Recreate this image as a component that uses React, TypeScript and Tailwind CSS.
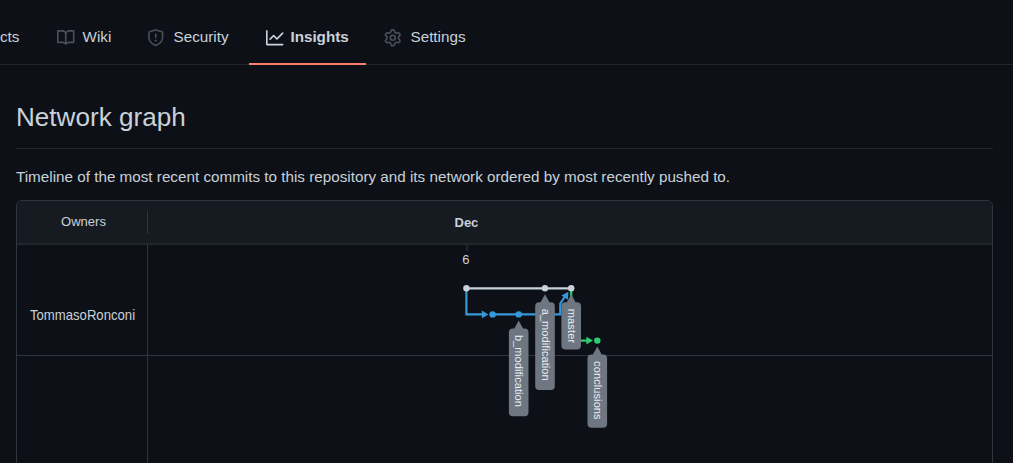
function Octicon({ d, className }: { d: string; className: string }) {
  return (
    <svg viewBox="0 0 16 16" className={`mt-[3.5px] h-[17.5px] w-[17.5px] shrink-0 ${className}`} fill="currentColor" fillRule="evenodd">
      <path d={d} />
    </svg>
  );
}

const BOOK =
  "M0 1.75A.75.75 0 01.75 1h4.253c1.227 0 2.317.59 3 1.501A3.744 3.744 0 0111.006 1h4.245a.75.75 0 01.75.75v10.5a.75.75 0 01-.75.75h-4.507a2.25 2.25 0 00-1.591.659l-.622.621a.75.75 0 01-1.06 0l-.622-.621A2.25 2.25 0 005.258 13H.75a.75.75 0 01-.75-.75V1.75zm8.755 3a2.25 2.25 0 012.25-2.25H14.5v9h-3.757c-.71 0-1.4.201-1.992.572l.004-7.322zm-1.504 7.324l.004-5.073-.002-2.253A2.25 2.25 0 005.003 2.5H1.5v9h3.757a3.75 3.75 0 011.994.574z";
const SHIELD =
  "M7.467.133a1.75 1.75 0 011.066 0l5.25 1.68A1.75 1.75 0 0115 3.48V7c0 1.566-.32 3.182-1.303 4.682-.983 1.498-2.585 2.813-5.032 3.855a1.7 1.7 0 01-1.33 0c-2.447-1.042-4.049-2.357-5.032-3.855C1.32 10.182 1 8.566 1 7V3.48a1.75 1.75 0 011.217-1.667l5.25-1.68zm.61 1.429a.25.25 0 00-.153 0l-5.25 1.68a.25.25 0 00-.174.238V7c0 1.358.275 2.666 1.057 3.86.784 1.194 2.121 2.34 4.366 3.297a.2.2 0 00.154 0c2.245-.956 3.582-2.104 4.366-3.298C13.225 9.666 13.5 8.36 13.5 7V3.48a.25.25 0 00-.174-.237l-5.25-1.68zM9 10.5a1 1 0 11-2 0 1 1 0 012 0zm-.25-5.75a.75.75 0 10-1.5 0v3a.75.75 0 001.5 0v-3z";
const GRAPH =
  "M1.5 1.75a.75.75 0 00-1.5 0v12.5c0 .414.336.75.75.75h14.5a.75.75 0 000-1.5H1.5V1.75zm14.28 2.53a.75.75 0 00-1.06-1.06L10 7.94 7.53 5.47a.75.75 0 00-1.06 0L3.22 8.72a.75.75 0 001.06 1.06L7 7.06l2.47 2.47a.75.75 0 001.06 0l5.25-5.25z";
const GEAR =
  "M7.429 1.525a6.593 6.593 0 011.142 0c.036.003.108.036.137.146l.289 1.105c.147.56.55.967.997 1.189.174.086.341.183.501.29.417.278.97.423 1.53.27l1.102-.303c.11-.03.175.016.195.046.219.31.41.641.573.989.014.031.022.11-.059.19l-.815.806c-.411.406-.562.957-.53 1.456a4.588 4.588 0 010 .582c-.032.499.119 1.05.53 1.456l.815.806c.08.08.073.159.059.19a6.494 6.494 0 01-.573.99c-.02.029-.086.074-.195.045l-1.103-.303c-.559-.153-1.112-.008-1.529.27-.16.107-.327.204-.5.29-.449.222-.851.628-.998 1.189l-.289 1.105c-.029.11-.101.143-.137.146a6.613 6.613 0 01-1.142 0c-.036-.003-.108-.037-.137-.146l-.289-1.105c-.147-.56-.55-.967-.997-1.189a4.502 4.502 0 01-.501-.29c-.417-.278-.97-.423-1.53-.27l-1.102.303c-.11.03-.175-.016-.195-.046a6.492 6.492 0 01-.573-.989c-.014-.031-.022-.11.059-.19l.815-.806c.411-.406.562-.957.53-1.456a4.587 4.587 0 010-.582c.032-.499-.119-1.05-.53-1.456l-.815-.806c-.08-.08-.073-.159-.059-.19a6.44 6.44 0 01.573-.99c.02-.029.086-.075.195-.045l1.103.303c.559.153 1.112.008 1.529-.27.16-.107.327-.204.5-.29.449-.222.851-.628.998-1.189l.289-1.105c.029-.11.101-.143.137-.146zM8 0c-.236 0-.47.01-.701.03-.743.065-1.29.615-1.458 1.261l-.29 1.106c-.017.066-.078.158-.211.224a5.994 5.994 0 00-.668.386c-.123.082-.233.09-.3.071L3.27 2.776c-.644-.177-1.392.02-1.82.63a7.977 7.977 0 00-.704 1.217c-.315.675-.111 1.422.363 1.891l.815.806c.05.048.098.147.088.294a6.084 6.084 0 000 .772c.01.147-.038.246-.088.294l-.815.806c-.474.469-.678 1.216-.363 1.891.2.428.436.835.704 1.218.428.609 1.176.806 1.82.63l1.103-.303c.066-.019.176-.011.299.071.213.143.436.272.668.386.133.066.194.158.212.224l.289 1.106c.169.646.715 1.196 1.458 1.26a8.094 8.094 0 001.402 0c.743-.064 1.29-.614 1.458-1.26l.29-1.106c.017-.066.078-.158.211-.224a5.98 5.98 0 00.668-.386c.123-.082.233-.09.3-.071l1.102.302c.644.177 1.392-.02 1.82-.63.268-.382.505-.789.704-1.217.315-.675.111-1.422-.364-1.891l-.814-.806c-.05-.048-.098-.147-.088-.294a6.1 6.1 0 000-.772c-.01-.147.039-.246.088-.294l.814-.806c.475-.469.679-1.216.364-1.891a7.992 7.992 0 00-.704-1.218c-.428-.609-1.176-.806-1.82-.63l-1.103.303c-.066.019-.176.011-.299-.071a5.991 5.991 0 00-.668-.386c-.133-.066-.194-.158-.212-.224L10.16 1.29C9.99.645 9.444.095 8.701.031A8.094 8.094 0 008 0zm1.5 8a1.5 1.5 0 11-3 0 1.5 1.5 0 013 0zM11 8a3 3 0 11-6 0 3 3 0 016 0z";

function Tab({ icon, label, className, iconClassName }: { icon: string; label: string; className: string; iconClassName: string }) {
  return (
    <a className={`flex h-[56px] shrink-0 items-center whitespace-nowrap ${className}`}>
      <Octicon d={icon} className={iconClassName} />
      <span>{label}</span>
    </a>
  );
}

function BranchTag({ x, y, length, name, textLength }: { x: number; y: number; length: number; name: string; textLength: number }) {
  return (
    <g>
      <path
        fill="#6e7681"
        d={`M${x} ${y}l4.4 8h1.4a4 4 0 0 1 4 4v${length - 16}a4 4 0 0 1 -4 4h-11.6a4 4 0 0 1 -4 -4v-${length - 16}a4 4 0 0 1 4 -4h1.4z`}
      />
      <text
        transform={`translate(${x - 3.4} ${y + 14.5}) rotate(90)`}
        fontSize="11"
        textLength={textLength}
        fill="#e6edf3"
      >
        {name}
      </text>
    </g>
  );
}

function NetworkChart() {
  return (
    <svg
      className="block h-[219px] w-[844px] shrink-0"
      viewBox="148 245 844 219"
      fontFamily='"Liberation Sans", Arial, sans-serif'
    >
      <path d="M148 355.5H992" stroke="#30363d" strokeWidth="1" />
      <path d="M467 245v6" stroke="#21262d" strokeWidth="2" />
      <text x="462.3" y="264" fontSize="13" fill="#c9d1d9">6</text>
      <g fill="none" strokeWidth="2.2">
        <path d="M571.2 288V340.6H588" stroke="#2ecc71" />
        <path d="M466.4 288V314.4H483" stroke="#3498db" />
        <path d="M492.6 314.4H560.3V303.5L566 295" stroke="#3498db" />
        <path d="M466.4 288.3H571.2" stroke="#c9d1d9" />
      </g>
      <g fill="#3498db">
        <path d="M481.8 310.5L488.5 314.4L481.8 318.2z" />
        <path d="M568.4 291.8L568 299.7L561.4 295.4z" />
        <circle cx="492.6" cy="314.4" r="3.2" />
        <circle cx="518.7" cy="314.4" r="3.2" />
      </g>
      <g fill="#2ecc71">
        <path d="M586.4 336.8L593 340.6L586.4 344.4z" />
        <circle cx="597.3" cy="340.6" r="3.2" />
      </g>
      <g fill="#c9d1d9">
        <circle cx="466.4" cy="288.3" r="3.2" />
        <circle cx="545" cy="288.3" r="3.2" />
        <circle cx="571.2" cy="288.3" r="3.2" />
      </g>
      <BranchTag x={571.2} y={294.2} length={55.3} name="master" textLength={34.5} />
      <BranchTag x={545} y={294.2} length={95.8} name="a_modification" textLength={72} />
      <BranchTag x={518.7} y={320.4} length={95.9} name="b_modification" textLength={72} />
      <BranchTag x={597.3} y={346.6} length={81.1} name="conclusions" textLength={58.5} />
    </svg>
  );
}

export default function App() {
  return (
    <div className="h-[463px] w-[1013px] overflow-hidden bg-[#0d1117] font-['Liberation_Sans',Arial,sans-serif] text-[15.24px] leading-[23px] text-[#c9d1d9]">
      <nav className="flex h-[65px] items-end border-b border-[#21262d]">
        <div className="-mb-px flex">
          <a className="flex h-[56px] w-[57px] items-center pb-[2px]">
            <span>cts</span>
          </a>
          <Tab className="w-[90px] gap-[8px] pb-[2px]" label="Wiki" icon={BOOK} iconClassName="text-[#484f58]" />
          <Tab className="w-[102px] gap-[9px] pb-[2px]" label="Security" icon={SHIELD} iconClassName="text-[#484f58]" />
          <Tab
            className="w-[117px] gap-[7px] border-b-2 border-[#f78166] pl-[17px] font-bold tracking-[-0.03px]"
            label="Insights"
            icon={GRAPH}
            iconClassName="text-[#c9d1d9]"
          />
          <Tab className="ml-[18px] gap-[9px] pb-[2px]" label="Settings" icon={GEAR} iconClassName="text-[#484f58]" />
        </div>
      </nav>

      <main className="pr-[20px] pl-[16px]">
        <h1 className="flex h-[84px] items-start border-b border-[#21262d] pt-[32px] text-[26.1px] leading-[40px]">
          Network graph
        </h1>
        <p className="pt-[16px] pb-[12px] whitespace-nowrap">
          Timeline of the most recent commits to this repository and its network ordered by most recently pushed to.
        </p>

        <section className="h-[280px] overflow-hidden rounded-[6px] border border-[#30363d]">
          <header className="flex h-[44px] items-center border-b-2 border-[#21262d] bg-[#161b22] text-[13px]">
            <div className="flex h-[23px] w-[131px] items-center justify-center border-r border-[#30363d] pb-[2px] pl-[3px]">
              Owners
            </div>
            <div className="pl-[306.5px] font-bold">Dec</div>
          </header>
          <div className="flex h-[240px]">
            <div className="w-[131px] shrink-0 border-r border-[#30363d]">
              <div className="flex h-[111px] items-center border-b border-[#30363d] pt-[28px] pl-[13px]">
                <span className="origin-left scale-x-[0.875] text-[15px]">TommasoRonconi</span>
              </div>
            </div>
            <NetworkChart />
          </div>
        </section>
      </main>
    </div>
  );
}
